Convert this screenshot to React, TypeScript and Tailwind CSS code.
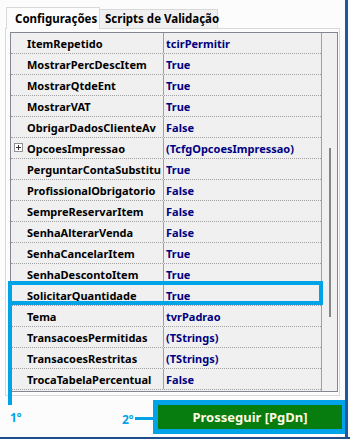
import React from 'react';

type Row = { name: string; value: string; expand?: boolean };

const rows: Row[] = [
  { name: 'ItemRepetido', value: 'tcirPermitir' },
  { name: 'MostrarPercDescItem', value: 'True' },
  { name: 'MostrarQtdeEnt', value: 'True' },
  { name: 'MostrarVAT', value: 'True' },
  { name: 'ObrigarDadosClienteAv', value: 'False' },
  { name: 'OpcoesImpressao', value: '(TcfgOpcoesImpressao)', expand: true },
  { name: 'PerguntarContaSubstitu', value: 'True' },
  { name: 'ProfissionalObrigatorio', value: 'False' },
  { name: 'SempreReservarItem', value: 'False' },
  { name: 'SenhaAlterarVenda', value: 'False' },
  { name: 'SenhaCancelarItem', value: 'True' },
  { name: 'SenhaDescontoItem', value: 'True' },
  { name: 'SolicitarQuantidade', value: 'True' },
  { name: 'Tema', value: 'tvrPadrao' },
  { name: 'TransacoesPermitidas', value: '(TStrings)' },
  { name: 'TransacoesRestritas', value: '(TStrings)' },
  { name: 'TrocaTabelaPercentual', value: 'False' },
];

const App: React.FC = () => {
  return (
    <div className="relative w-[350px] h-[439px] bg-[#fcfcfc] overflow-hidden font-['Noto_Sans',sans-serif] font-bold text-[11px] text-black">
      {/* tabs */}
      <div className="flex items-end h-[28px] pl-[6px] whitespace-nowrap">
        <div className="relative z-10 -mb-px h-[22px] w-[94px] border border-b-0 border-[#d9d9d9] bg-[#fcfcfc] pl-[8px] flex items-center leading-none text-[11.5px]">
          Configurações
        </div>
        <div className="h-[19px] w-[118px] border border-l-0 border-b-0 border-[#d9d9d9] bg-[#f0f0f0] pl-[5px] flex items-center leading-none text-[11.5px]">
          Scripts de Validação
        </div>
      </div>

      {/* panel */}
      <div className="ml-[5px] w-[335px] h-[368px] border border-[#d9d9d9] pt-[3px] pl-[4px] pr-px pb-[3px]">
        <div className="flex h-full border border-[#828790] bg-[#f0f0f0]">
          <div className="w-[311px] border-r border-[#a0a0a0]">
            {rows.map((r) => (
              <div key={r.name} className="flex h-[21px] border-b border-dotted border-[#a0a0a0]">
                <div className="relative w-[153px] border-r border-[#a0a0a0] pl-[16px] flex items-center overflow-hidden whitespace-nowrap leading-none">
                  {r.expand && (
                    <div className="absolute left-[3px] top-[5px] w-[9px] h-[9px] border border-[#919191] bg-white flex items-center justify-center">
                      <div className="relative w-[5px] h-[5px]">
                        <div className="absolute left-0 top-[2px] w-[5px] h-px bg-[#333]" />
                        <div className="absolute left-[2px] top-0 w-px h-[5px] bg-[#333]" />
                      </div>
                    </div>
                  )}
                  {r.name}
                </div>
                <div className="flex-1 pl-[2px] flex items-center text-[#000080] whitespace-nowrap leading-none">
                  {r.value}
                </div>
              </div>
            ))}
          </div>
          <div className="relative flex-1">
            <div className="absolute left-[7px] top-[115px] w-[2px] h-[169px] bg-[#868686]" />
          </div>
        </div>
      </div>

      {/* bottom row */}
      <div className="flex items-center h-[34px] mt-[4px] pl-[10px] text-[#00a2e8]">
        <div className="w-[112px] text-[12px] leading-none pt-[2px]">1º</div>
        <div className="w-[13px] text-[12px] leading-none pt-[5px]">2º</div>
        <div className="w-[18px] h-[3px] bg-[#00a2e8] mt-[2px]" />
        <div className="w-[193px] h-[34px] border-[5px] border-r-[4px] border-[#00a2e8] bg-[#077d10] flex items-center justify-center text-[13px] font-bold text-[#fffbe0] leading-none">
          Prosseguir [PgDn]
        </div>
      </div>

      {/* annotations */}
      <div className="absolute left-[8px] top-[281px] w-[315px] h-[24px] border-[4px] border-[#00a2e8]" />
      <div className="absolute left-[8px] top-[300px] w-[4px] h-[105px] bg-[#00a2e8]" />

      {/* window frame */}
      <div className="absolute left-[345px] top-0 w-[3px] h-full bg-[#1d58a7]" />
      <div className="absolute left-0 top-[437px] w-full h-[2px] bg-[#1c4f8c]" />
    </div>
  );
};

export default App;
